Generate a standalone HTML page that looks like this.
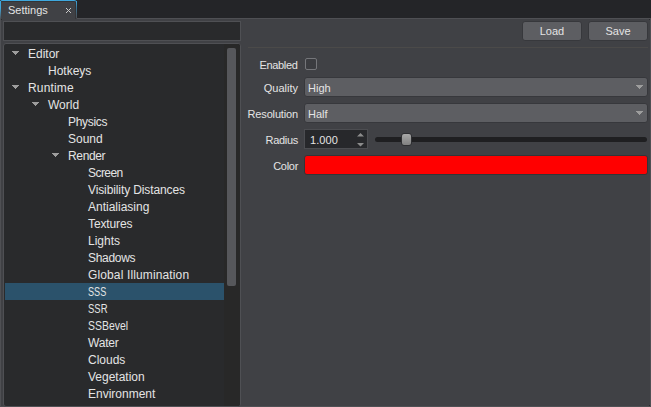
<!DOCTYPE html>
<html><head><meta charset="utf-8"><title>Settings</title>
<style>
*{box-sizing:border-box;margin:0;padding:0}
html,body{width:651px;height:407px;overflow:hidden;background:#404145}
body{position:relative;font-family:"Liberation Sans",sans-serif;color:#e4e4e4;font-size:11px}
.abs{position:absolute}
#topbar{left:0;top:0;width:651px;height:18px;background:#242528}
#frame{left:0;top:18px;width:651px;height:389px;border:1px solid #4f5054;background:#404145}
.dot{width:1px;height:1px;background:#2a2b2e}
#tab{left:0;top:0;width:77px;height:19px;background:#404145;border-top:1px solid #3fa8de;border-top-left-radius:2px;border-top-right-radius:3px;box-shadow:inset 0 1px 0 #333437}
#tabl{left:0;top:1px;width:1px;height:18px;background:linear-gradient(#3fa8de,#3fa8de 40%,#4f5054)}
#tabr{left:76px;top:1px;width:1px;height:17px;background:linear-gradient(#3fa8de,#3a7596 40%,#4f5054)}
#tabr2{left:75px;top:2px;width:1px;height:17px;background:#343538}
#tabtxt{left:8px;top:3px;line-height:14px;font-size:11px;white-space:nowrap}
#search{left:3px;top:21px;width:238px;height:20px;background:#292a2c;border:1px solid #4f5054}
#tree{left:3px;top:43px;width:238px;height:364px;background:#292a2c;border:1px solid #4f5054;border-radius:3px;overflow:hidden}
.row{position:absolute;left:1px;height:17px;line-height:17px;font-size:12px;white-space:nowrap;width:219px}
.row span{position:absolute;top:1px;margin-left:-1px}
.sel{background:#2b526b}
.tri{position:absolute;width:7px;height:4px}
#thumb{left:227px;top:48px;width:9px;height:238px;background:#56575b;border-radius:2px}
.btn{height:20px;width:60px;top:21px;background:#5d5e62;border:1px solid #37383c;border-radius:3px;text-align:center;line-height:18px;font-size:11px}
#sep{left:248px;top:47px;width:400px;height:1px;background:#4b4a49}
.lbl{width:100px;left:198px;text-align:right;font-size:11px;line-height:14px;white-space:nowrap;letter-spacing:-0.3px}
.combo{left:304px;width:344px;height:20px;background:#5d5e62;border:1px solid #37383c;border-radius:3px;font-size:11px;line-height:20px;padding-left:3px}
#chk{left:305px;top:58px;width:12px;height:12px;border:1px solid #75767a;border-radius:2px;background:#3b3c40}
#spin{left:304px;top:129px;width:64px;height:20px;background:#27282b;border:1px solid #4c4d51;font-size:11px;line-height:20px;padding-left:5px;letter-spacing:0.1px}
#groove{left:375px;top:137px;width:272px;height:5px;background:#1f1f21;border-radius:2.5px}
#handle{left:401px;top:133px;width:11px;height:13px;border-radius:3px;background:linear-gradient(#a8a8a8,#818181);border:1px solid #2e2f32}
#color{left:304px;top:155px;width:344px;height:20px;background:#ff0000;border:1px solid #333437;border-radius:3px}
</style></head><body>
<div class="abs" id="topbar"></div>
<div class="abs" id="frame"></div>
<i class="abs dot" style="left:1px;top:19px"></i><i class="abs dot" style="left:649px;top:19px"></i><i class="abs dot" style="left:649px;top:405px"></i>
<div class="abs" id="tab"></div><div class="abs" id="tabl"></div><div class="abs" id="tabr"></div><div class="abs" id="tabr2"></div>
<div class="abs" id="tabtxt">Settings</div>
<svg class="abs" style="left:65px;top:7px" width="7" height="7" viewBox="0 0 7 7"><path d="M1 1 L6 6 M6 1 L1 6" stroke="#cacaca" stroke-width="1" fill="none"/></svg>
<div class="abs" id="search"></div>
<div class="abs" id="tree">
<div class="abs" style="left:220px;top:0;width:16px;height:362px;background:#282828"></div>
<div class="row" style="top:1px"><svg class="tri" style="left:7px;top:6px" viewBox="0 0 7 4" shape-rendering="crispEdges"><path d="M0 0h7v1h-1v1h-1v1h-1v1h-1v-1h-1v-1h-1v-1h-1z" fill="#9d9d9d"/></svg><span style="left:24px">Editor</span></div>
<div class="row" style="top:18px"><span style="left:44px">Hotkeys</span></div>
<div class="row" style="top:35px"><svg class="tri" style="left:7px;top:6px" viewBox="0 0 7 4" shape-rendering="crispEdges"><path d="M0 0h7v1h-1v1h-1v1h-1v1h-1v-1h-1v-1h-1v-1h-1z" fill="#9d9d9d"/></svg><span style="left:24px;letter-spacing:0.15px">Runtime</span></div>
<div class="row" style="top:52px"><svg class="tri" style="left:27px;top:6px" viewBox="0 0 7 4" shape-rendering="crispEdges"><path d="M0 0h7v1h-1v1h-1v1h-1v1h-1v-1h-1v-1h-1v-1h-1z" fill="#9d9d9d"/></svg><span style="left:44px">World</span></div>
<div class="row" style="top:69px"><span style="left:64px;letter-spacing:-0.3px">Physics</span></div>
<div class="row" style="top:86px"><span style="left:64px">Sound</span></div>
<div class="row" style="top:103px"><svg class="tri" style="left:47px;top:6px" viewBox="0 0 7 4" shape-rendering="crispEdges"><path d="M0 0h7v1h-1v1h-1v1h-1v1h-1v-1h-1v-1h-1v-1h-1z" fill="#9d9d9d"/></svg><span style="left:64px;letter-spacing:-0.35px">Render</span></div>
<div class="row" style="top:120px"><span style="left:84px;letter-spacing:-0.55px">Screen</span></div>
<div class="row" style="top:137px"><span style="left:84px;letter-spacing:-0.11px">Visibility Distances</span></div>
<div class="row" style="top:154px"><span style="left:84px">Antialiasing</span></div>
<div class="row" style="top:171px"><span style="left:84px;letter-spacing:-0.12px">Textures</span></div>
<div class="row" style="top:188px"><span style="left:84px">Lights</span></div>
<div class="row" style="top:205px"><span style="left:84px;letter-spacing:-0.3px">Shadows</span></div>
<div class="row" style="top:222px"><span style="left:84px;letter-spacing:0.13px">Global Illumination</span></div>
<div class="row sel" style="top:239px"><span style="left:84px;transform:scaleX(.76);transform-origin:0 50%">SSS</span></div>
<div class="row" style="top:256px"><span style="left:84px;transform:scaleX(.79);transform-origin:0 50%">SSR</span></div>
<div class="row" style="top:273px"><span style="left:84px;transform:scaleX(.87);transform-origin:0 50%">SSBevel</span></div>
<div class="row" style="top:290px"><span style="left:84px;letter-spacing:-0.2px">Water</span></div>
<div class="row" style="top:307px"><span style="left:84px">Clouds</span></div>
<div class="row" style="top:324px"><span style="left:84px">Vegetation</span></div>
<div class="row" style="top:341px"><span style="left:84px">Environment</span></div>
</div>
<div class="abs" id="thumb"></div>
<div class="abs btn" style="left:522px">Load</div>
<div class="abs btn" style="left:588px">Save</div>
<div class="abs" id="sep"></div>
<div class="abs lbl" style="top:58px;letter-spacing:-0.35px;left:197.5px">Enabled</div>
<div class="abs" id="chk"></div>
<div class="abs lbl" style="top:81px;letter-spacing:0">Quality</div>
<div class="abs combo" style="top:77px">High<svg class="tri" style="left:331px;top:7px" viewBox="0 0 7 4" shape-rendering="crispEdges"><path d="M0 0h7v1h-1v1h-1v1h-1v1h-1v-1h-1v-1h-1v-1h-1z" fill="#9d9d9d"/></svg></div>
<div class="abs lbl" style="top:107px;letter-spacing:-0.15px">Resolution</div>
<div class="abs combo" style="top:103px">Half<svg class="tri" style="left:331px;top:7px" viewBox="0 0 7 4" shape-rendering="crispEdges"><path d="M0 0h7v1h-1v1h-1v1h-1v1h-1v-1h-1v-1h-1v-1h-1z" fill="#9d9d9d"/></svg></div>
<div class="abs lbl" style="top:133px">Radius</div>
<div class="abs" id="spin">1.000</div>
<svg class="abs" style="left:356px;top:132px" width="9" height="16" viewBox="0 0 9 16"><path d="M1 4.5 L4.5 1 L8 4.5 Z M1 11 L8 11 L4.5 14.5 Z" fill="#8c8c8c"/></svg>
<div class="abs" id="groove"></div>
<div class="abs" id="handle"></div>
<div class="abs lbl" style="top:159px">Color</div>
<div class="abs" id="color"></div>
</body></html>
